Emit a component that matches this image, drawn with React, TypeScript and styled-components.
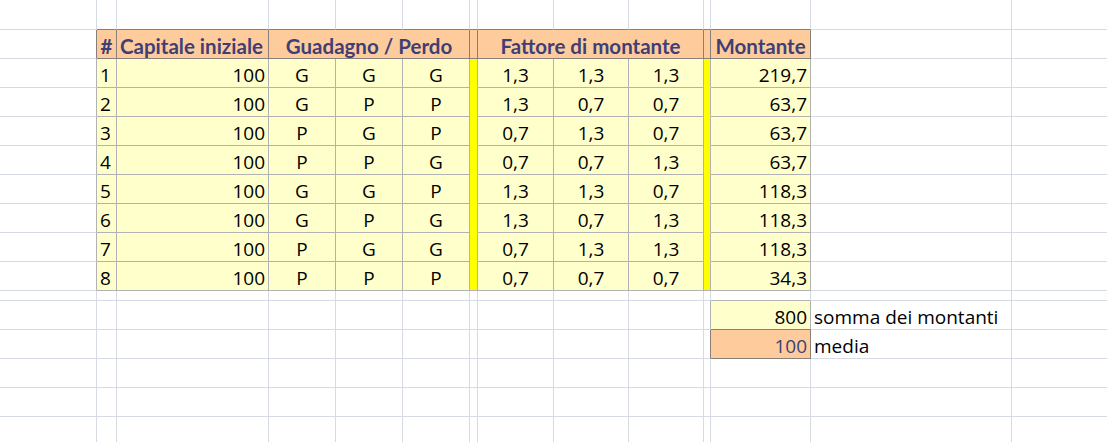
import React from "react";
import styled, { createGlobalStyle } from "styled-components";

const GlobalStyle = createGlobalStyle`
  html, body { margin: 0; padding: 0; background: #ffffff; overflow: hidden; }
  #root { width: 1107px; height: 442px; overflow: hidden; }
`;

type Kind = "grid" | "note" | "input" | "bar" | "head";
type Align = "left" | "center" | "right";

interface CellDef {
  text?: string;
  kind?: Kind;
  align?: Align;
  span?: number;
}

const COLS = [97, 20, 152, 67, 67, 67, 8, 76, 75, 75, 7, 100, 201, 200];
const ROW_H = [30, 29, 29, 29, 29, 29, 29, 29, 29, 29, 10, 29, 29, 29, 29, 29];

const GRID = "#d5dae3";
const NOTE_BORDER = "#b2b2b2";
const INPUT_BORDER = "#8a7f78";
const YELLOW = "#ffff00";

const Sheet = styled.div`
  display: grid;
  grid-template-columns: ${COLS.map((w) => `${w}px`).join(" ")};
  grid-template-rows: ${ROW_H.map((h) => `${h}px`).join(" ")};
  font-family: "Open Sans", "Liberation Sans", sans-serif;
  font-size: 19px;
  color: #000000;
`;

const Cell = styled.div<{
  $bg: string;
  $right: string;
  $bottom: string;
  $align: Align;
  $bold: boolean;
  $color: string;
  $span: number;
}>`
  grid-column: span ${(p) => p.$span};
  box-sizing: border-box;
  background: ${(p) => p.$bg};
  border-right: 1px solid ${(p) => p.$right};
  border-bottom: 1px solid ${(p) => p.$bottom};
  display: flex;
  align-items: flex-end;
  justify-content: ${(p) =>
    p.$align === "left" ? "flex-start" : p.$align === "right" ? "flex-end" : "center"};
  padding: 0 3px 0 3px;
  font-family: ${(p) => (p.$bold ? `"Lato", "Open Sans", sans-serif` : `"Open Sans", "Liberation Sans", sans-serif`)};
  font-size: ${(p) => (p.$bold ? "20.5px" : "19px")};
  font-weight: ${(p) => (p.$bold ? 700 : 400)};
  color: ${(p) => p.$color};
  white-space: nowrap;
  overflow: visible;
  line-height: 24px;
`;

const e = (n = 1): CellDef[] => Array.from({ length: n }, () => ({}));

const head = (text: string, span = 1, align: Align = "center"): CellDef => ({
  text,
  kind: "head",
  align,
  span,
});
const note = (text: string, align: Align): CellDef => ({ text, kind: "note", align });
const bar: CellDef = { kind: "bar" };

const data: [string, string[], string[], string][] = [
  ["1", ["G", "G", "G"], ["1,3", "1,3", "1,3"], "219,7"],
  ["2", ["G", "P", "P"], ["1,3", "0,7", "0,7"], "63,7"],
  ["3", ["P", "G", "P"], ["0,7", "1,3", "0,7"], "63,7"],
  ["4", ["P", "P", "G"], ["0,7", "0,7", "1,3"], "63,7"],
  ["5", ["G", "G", "P"], ["1,3", "1,3", "0,7"], "118,3"],
  ["6", ["G", "P", "G"], ["1,3", "0,7", "1,3"], "118,3"],
  ["7", ["P", "G", "G"], ["0,7", "1,3", "1,3"], "118,3"],
  ["8", ["P", "P", "P"], ["0,7", "0,7", "0,7"], "34,3"],
];

const rows: CellDef[][] = [
  e(14),
  [
    ...e(1),
    head("#"),
    head("Capitale iniziale", 1, "left"),
    head("Guadagno / Perdo", 3),
    head(""),
    head("Fattore di montante", 3),
    head(""),
    head("Montante"),
    ...e(2),
  ],
  ...data.map(([n, gp, f, m]) => [
    ...e(1),
    note(n, "left"),
    note("100", "right"),
    ...gp.map((g) => note(g, "center")),
    bar,
    ...f.map((x) => note(x, "center")),
    bar,
    note(m, "right"),
    ...e(2),
  ]),
  e(14),
  [...e(11), note("800", "right"), { text: "somma dei montanti", align: "left" }, ...e(1)],
  [
    ...e(11),
    { text: "100", kind: "input", align: "right" },
    { text: "media", align: "left" },
    ...e(1),
  ],
  e(14),
  e(14),
  e(14),
];

// expand merged cells to a per-column kind map
const kindMap: Kind[][] = rows.map((r) => {
  const out: Kind[] = [];
  r.forEach((c) => {
    for (let i = 0; i < (c.span ?? 1); i++) out.push(c.kind ?? "grid");
  });
  return out;
});

const rank = (k: Kind | undefined) =>
  k === "head" || k === "input" ? 3 : k === "note" ? 2 : k === "bar" ? 1 : 0;

const borderFor = (a: Kind | undefined, b: Kind | undefined, vertical: boolean) => {
  if (!vertical && a === "bar" && b === "bar") return YELLOW;
  const r = Math.max(rank(a), rank(b));
  if (r === 3) return INPUT_BORDER;
  if (r >= 1) return NOTE_BORDER;
  return GRID;
};

const bgFor = (k: Kind | undefined) =>
  k === "head" || k === "input" ? "#fecc9c" : k === "note" ? "#ffffcc" : k === "bar" ? YELLOW : "#ffffff";

export default function App() {
  return (
    <>
      <GlobalStyle />
      <Sheet>
        {rows.map((r, ri) => {
          let col = 0;
          return r.map((c, ci) => {
            const span = c.span ?? 1;
            const start = col;
            col += span;
            const last = start + span - 1;
            const own = kindMap[ri][last];
            const rightK = kindMap[ri][last + 1];
            const belowK = kindMap[ri + 1]?.[start];
            const kind = c.kind ?? "grid";
            const right = borderFor(own, rightK, true);
            const bottom = borderFor(kind, belowK, false);
            const bold = kind === "head";
            const color = kind === "head" || kind === "input" ? "#3f3f76" : "#000000";
            return (
              <Cell
                key={`${ri}-${ci}`}
                $bg={bgFor(kind)}
                $right={right}
                $bottom={bottom}
                $align={c.align ?? "left"}
                $bold={bold}
                $color={color}
                $span={span}
              >
                {c.text ?? ""}
              </Cell>
            );
          });
        })}
      </Sheet>
    </>
  );
}
